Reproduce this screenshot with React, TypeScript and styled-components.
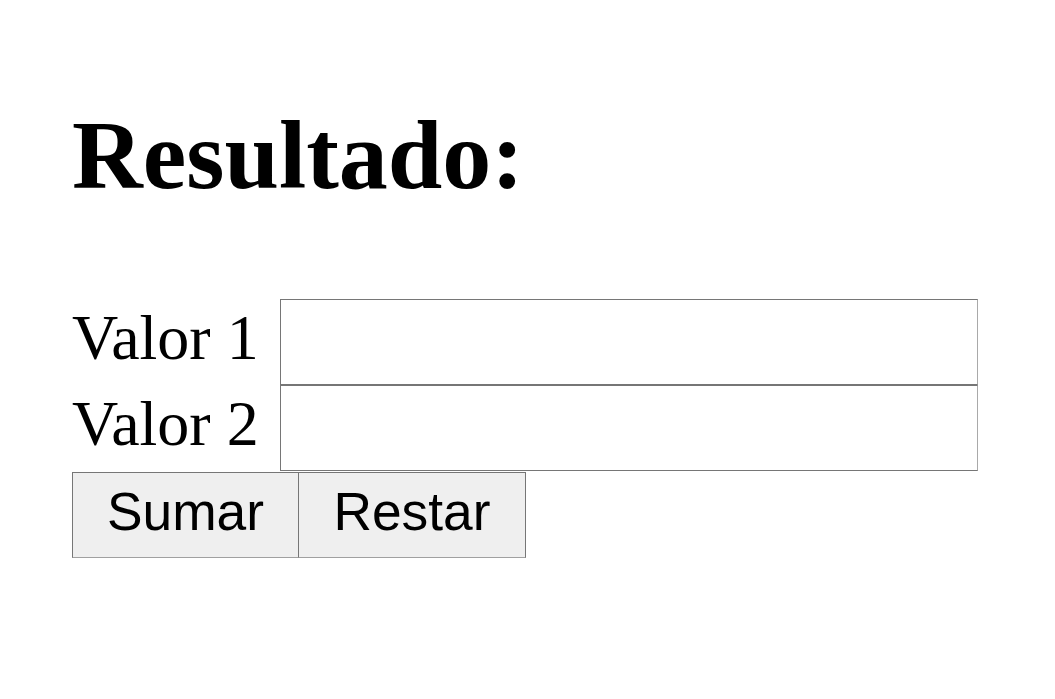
import React from "react";
import styled, { createGlobalStyle } from "styled-components";

const GlobalStyle = createGlobalStyle`
  html, body { margin: 0; padding: 0; background: #ffffff; }
  body { font-family: "Liberation Serif", "Times New Roman", serif; color: #000; }
`;

const Page = styled.div`
  display: flex;
  flex-direction: column;
  align-items: flex-start;
  padding: 0 0 0 72px;
`;

const Title = styled.h1`
  margin: 0;
  padding-top: 99px;
  font-family: "Liberation Serif", "Times New Roman", serif;
  font-weight: 700;
  font-size: 98px;
  line-height: normal;
  margin-bottom: 88px;
`;

const Row = styled.div`
  display: grid;
  grid-template-columns: 208px 698px;
  align-items: center;
  height: 86px;
`;

const Label = styled.label`
  font-family: "Liberation Serif", "Times New Roman", serif;
  font-size: 64px;
  line-height: normal;
  white-space: nowrap;
  padding-bottom: 9px;
`;

const Input = styled.input`
  box-sizing: border-box;
  width: 698px;
  height: 86px;
  margin: 0;
  padding: 0 8px;
  border: 1px solid #767676;
  border-right-color: #a9a9a9;
  background: #fff;
  font-size: 53px;
  outline: none;
`;

const Buttons = styled.div`
  display: flex;
  margin-top: 1px;
`;

const Button = styled.button<{ $w: number }>`
  box-sizing: border-box;
  width: ${(p) => p.$w}px;
  height: 86px;
  margin: 0;
  padding: 0 0 7px;
  border: 1px solid #767676;
  border-bottom-color: #a0a0a0;
  background: #efefef;
  font-family: "Liberation Sans", Arial, sans-serif;
  font-size: 53.33px;
  color: #000;
  line-height: normal;
  & + & { margin-left: -1px; }
`;

export default function App() {
  return (
    <>
      <GlobalStyle />
      <Page>
        <Title>Resultado:</Title>
        <Row>
          <Label htmlFor="v1">Valor 1</Label>
          <Input id="v1" type="text" />
        </Row>
        <Row>
          <Label htmlFor="v2">Valor 2</Label>
          <Input id="v2" type="text" />
        </Row>
        <Buttons>
          <Button $w={227}>Sumar</Button>
          <Button $w={228}>Restar</Button>
        </Buttons>
      </Page>
    </>
  );
}
